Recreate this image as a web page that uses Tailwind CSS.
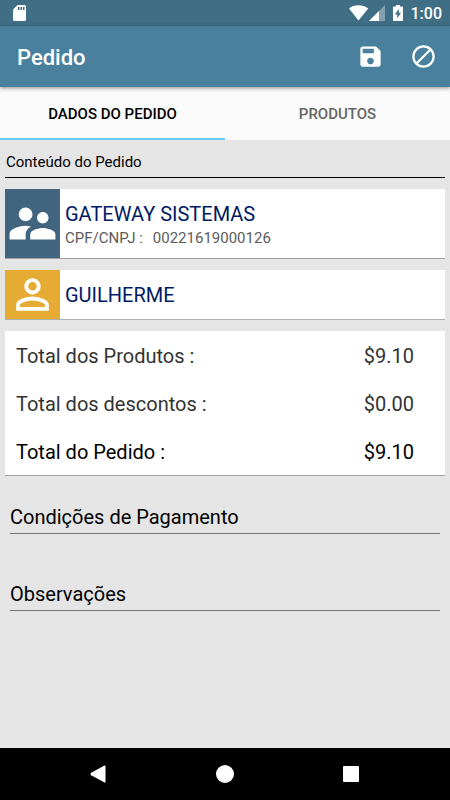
<!DOCTYPE html>
<html lang="pt-BR">
<head>
<meta charset="utf-8">
<meta name="viewport" content="width=device-width, initial-scale=1">
<title>Pedido</title>
<script src="https://cdn.jsdelivr.net/npm/@tailwindcss/browser@4"></script>
</head>
<body class="flex min-h-screen flex-col bg-[#e5e5e5] font-['Roboto',sans-serif] text-black">
  <!-- Status bar -->
  <div class="flex h-[26px] items-center justify-between bg-[#3f6e85] pl-3 pr-2 text-white">
    <svg class="h-4 w-4" viewBox="0 0 16 16" aria-hidden="true"><path fill="#fff" d="M5.5 0H12.5Q14 0 14 1.5V14.5Q14 16 12.5 16H2.5Q1 16 1 14.5V4.5Z"/><path fill="#3f6e85" d="M6 2h1.5v3H6zM8.500 2H10v3H8.500zM11 2h1.500v3H11z"/></svg>
    <div class="flex items-center">
      <svg class="h-4 w-5" viewBox="0 0 20 16" aria-hidden="true"><path fill="#fff" d="M9.500 15.500L0 3.600C5-.8 14-.8 19.200 3.600Z"/></svg>
      <svg class="h-4 w-4" viewBox="0 0 16 16" aria-hidden="true"><path fill="#fff" fill-opacity=".35" d="M16 0V16H0Z"/><path fill="#fff" d="M10 6V16H0Z"/></svg>
      <svg class="ml-2 h-4 w-[10px]" viewBox="0 0 10 16" aria-hidden="true"><path fill="#fff" d="M3 0h4v1.500h2.200q.8 0 .8.8v12.900q0 .8-.8.8H.8q-.8 0-.8-.8V2.300q0-.8.8-.8H3z"/><path fill="#3f6e85" d="M5.800 3.800L2 9.500h2.300v4L8 7.800H5.800z"/></svg>
      <span class="ml-2 pt-[2px] text-base leading-5 font-medium">1:00</span>
    </div>
  </div>

  <!-- Toolbar -->
  <header class="relative z-10 flex h-[61px] items-center justify-between bg-[#48809d] pl-[17px] pr-[13px] text-white shadow-[0_1px_4px_rgba(0,0,0,0.45)]">
    <h1 class="pt-[2px] text-[22px] leading-7 font-medium">Pedido</h1>
    <div class="flex gap-[26px]">
      <button type="button" aria-label="Salvar"><svg class="h-[27px] w-[27px]" viewBox="0 0 24 24" fill="currentColor"><path d="M17 3H5c-1.110 0-2 .9-2 2v14c0 1.100.89 2 2 2h14c1.100 0 2-.9 2-2V7l-4-4zm-5 16c-1.660 0-3-1.340-3-3s1.340-3 3-3 3 1.340 3 3-1.340 3-3 3zm3-10H5V5h10v4z"/></svg></button>
      <button type="button" aria-label="Cancelar"><svg class="h-[27px] w-[27px]" viewBox="0 0 24 24" fill="none" stroke="currentColor" stroke-width="2"><circle cx="12" cy="12" r="9"/><path d="M18.400 5.600L5.600 18.400"/></svg></button>
    </div>
  </header>

  <!-- Tabs -->
  <div role="tablist" class="grid h-[53px] grid-cols-2 bg-[#fafafa] text-[15px] leading-5 font-medium">
    <button type="button" role="tab" aria-selected="true" class="border-b-2 border-[#68cdfa] pt-[3px]">DADOS DO PEDIDO</button>
    <button type="button" role="tab" aria-selected="false" class="border-b-2 border-transparent pt-[3px] text-[#666]">PRODUTOS</button>
  </div>

  <main class="flex-1 px-[5px] pt-3">
    <h2 class="border-b border-black pb-[5px] pl-px text-[15px] leading-5">Conteúdo do Pedido</h2>

    <button type="button" class="mt-[11px] flex h-[70px] w-full items-stretch border-b border-[#a0a0a0] bg-white text-left">
      <span class="flex w-[55px] items-center justify-center bg-[#41647f] text-white">
        <svg class="h-[55px] w-[55px]" viewBox="0 0 24 24" fill="currentColor" aria-hidden="true"><path d="M16.500 12c1.380 0 2.490-1.120 2.490-2.500S17.880 7 16.500 7C15.120 7 14 8.120 14 9.500s1.120 2.500 2.500 2.500zM9 11c1.660 0 2.990-1.340 2.990-3S10.660 5 9 5C7.340 5 6 6.340 6 8s1.340 3 3 3zm7.500 3c-1.830 0-5.500.92-5.500 2.750V19h11v-2.250c0-1.830-3.670-2.750-5.500-2.750zM9 13c-2.330 0-7 1.170-7 3.500V19h7v-2.250c0-.85.33-2.340 2.370-3.470C10.500 13.100 9.660 13 9 13z"/></svg>
      </span>
      <span class="flex flex-col justify-center pl-[5px]">
        <span class="text-xl leading-7 text-[#001a66]">GATEWAY SISTEMAS</span>
        <span class="flex gap-[10px] text-[15px] leading-5 text-[#5c5c5c]"><span>CPF/CNPJ :</span><span>00221619000126</span></span>
      </span>
    </button>

    <button type="button" class="mt-[11px] flex h-[50px] w-full items-stretch border-b border-[#b0b0b0] bg-white text-left">
      <span class="flex w-[55px] items-center justify-center bg-[#e6ab33] text-white">
        <svg class="h-[49px] w-[49px]" viewBox="0 0 24 24" fill="currentColor" aria-hidden="true"><path d="M12 5.900c1.160 0 2.100.94 2.100 2.100s-.94 2.100-2.100 2.100S9.900 9.160 9.900 8s.94-2.100 2.100-2.100m0 9c2.970 0 6.100 1.460 6.100 2.100v1.100H5.900V17c0-.64 3.130-2.100 6.100-2.100M12 4C9.790 4 8 5.790 8 8s1.790 4 4 4 4-1.790 4-4-1.790-4-4-4zm0 9c-2.670 0-8 1.340-8 4v3h16v-3c0-2.660-5.330-4-8-4z"/></svg>
      </span>
      <span class="flex items-center pl-[5px] text-xl leading-7 text-[#001a66]">GUILHERME</span>
    </button>

    <dl class="mt-[11px] border-b border-[#a0a0a0] bg-white pl-[11px] pr-[31px] text-xl leading-[46px] text-[#333]">
      <div class="flex justify-between pt-[2px]"><dt>Total dos Produtos :</dt><dd>$9.10</dd></div>
      <div class="flex justify-between pt-[2px]"><dt>Total dos descontos :</dt><dd>$0.00</dd></div>
      <div class="flex justify-between pt-[2px] text-black"><dt>Total do Pedido :</dt><dd>$9.10</dd></div>
    </dl>

    <form class="flex flex-col gap-[45px] px-[5px] pt-[26px]">
      <input type="text" aria-label="Condições de Pagamento" placeholder="Condições de Pagamento" class="h-8 w-full border-b border-[#767676] pb-px text-xl text-black outline-none placeholder:text-black">
      <input type="text" aria-label="Observações" placeholder="Observações" class="h-8 w-full border-b border-[#767676] pb-px text-xl text-black outline-none placeholder:text-black">
    </form>
  </main>

  <!-- System navigation -->
  <nav aria-label="Sistema" class="flex h-[52px] items-center justify-center gap-[100px] bg-black text-white">
    <button type="button" aria-label="Voltar"><svg class="h-[26px] w-[26px]" viewBox="0 0 26 26" fill="currentColor"><path d="M4.500 13q0-.8.7-1.200L18.500 4.500q1-.4 1 .6V20.900q0 1-1 .6L5.200 14.200q-.7-.4-.7-1.200z"/></svg></button>
    <button type="button" aria-label="Início"><svg class="h-[26px] w-[26px]" viewBox="0 0 26 26" fill="currentColor"><circle cx="13" cy="13" r="9"/></svg></button>
    <button type="button" aria-label="Recentes"><svg class="h-[26px] w-[26px]" viewBox="0 0 26 26" fill="currentColor"><rect x="5" y="5" width="16" height="16" rx="1"/></svg></button>
  </nav>
</body>
</html>
